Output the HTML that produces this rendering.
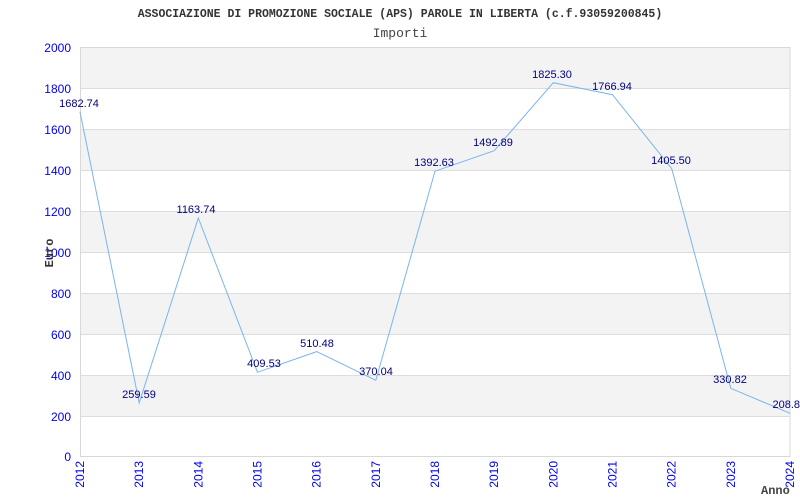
<!DOCTYPE html>
<html><head><meta charset="utf-8"><style>
html,body{margin:0;padding:0;background:#fff;width:800px;height:500px;overflow:hidden}
</style></head><body>
<svg width="800" height="500" xmlns="http://www.w3.org/2000/svg">
<text x="400" y="17" text-anchor="middle" font-family="Liberation Mono, monospace" font-size="11.5" font-weight="bold" fill="#333">ASSOCIAZIONE DI PROMOZIONE SOCIALE (APS) PAROLE IN LIBERTA (c.f.93059200845)</text>
<text x="400" y="37" text-anchor="middle" font-family="Liberation Mono, monospace" font-size="13" fill="#444">Importi</text>
<g fill="#f3f3f3">
<rect x="80" y="47" width="710" height="41"/>
<rect x="80" y="129" width="710" height="41"/>
<rect x="80" y="211" width="710" height="41"/>
<rect x="80" y="293" width="710" height="41"/>
<rect x="80" y="375" width="710" height="41"/>
</g>
<g stroke="#ddd" stroke-width="1">
<line x1="80" y1="88.5" x2="790" y2="88.5"/><line x1="80" y1="129.5" x2="790" y2="129.5"/>
<line x1="80" y1="170.5" x2="790" y2="170.5"/><line x1="80" y1="211.5" x2="790" y2="211.5"/>
<line x1="80" y1="252.5" x2="790" y2="252.5"/><line x1="80" y1="293.5" x2="790" y2="293.5"/>
<line x1="80" y1="334.5" x2="790" y2="334.5"/><line x1="80" y1="375.5" x2="790" y2="375.5"/>
<line x1="80" y1="416.5" x2="790" y2="416.5"/>
</g>
<rect x="80.5" y="47.5" width="709.5" height="409" fill="none" stroke="#d8d8d8"/>
<g font-family="Liberation Sans, sans-serif" font-size="12" fill="#0000ee" text-anchor="end">
<text x="71" y="52">2000</text><text x="71" y="93">1800</text><text x="71" y="134">1600</text>
<text x="71" y="175">1400</text><text x="71" y="216">1200</text><text x="71" y="257">1000</text>
<text x="71" y="298">800</text><text x="71" y="339">600</text><text x="71" y="380">400</text>
<text x="71" y="421">200</text><text x="71" y="461">0</text>
</g>
<g font-family="Liberation Sans, sans-serif" font-size="12" fill="#0000ee" text-anchor="end">
<text transform="translate(84,461) rotate(-90)">2012</text>
<text transform="translate(143.2,461) rotate(-90)">2013</text>
<text transform="translate(202.3,461) rotate(-90)">2014</text>
<text transform="translate(261.5,461) rotate(-90)">2015</text>
<text transform="translate(320.7,461) rotate(-90)">2016</text>
<text transform="translate(379.8,461) rotate(-90)">2017</text>
<text transform="translate(439,461) rotate(-90)">2018</text>
<text transform="translate(498.2,461) rotate(-90)">2019</text>
<text transform="translate(557.3,461) rotate(-90)">2020</text>
<text transform="translate(616.5,461) rotate(-90)">2021</text>
<text transform="translate(675.7,461) rotate(-90)">2022</text>
<text transform="translate(734.8,461) rotate(-90)">2023</text>
<text transform="translate(794,461) rotate(-90)">2024</text>
</g>
<text transform="translate(53,253) rotate(-90)" text-anchor="middle" font-family="Liberation Mono, monospace" font-size="12" font-weight="bold" fill="#333">Euro</text>
<text x="761" y="494" font-family="Liberation Mono, monospace" font-size="12" font-weight="bold" fill="#444">Anno</text>
<polyline fill="none" stroke="#7ab4f0" stroke-width="1" points="80,111.9 139.2,402.9 198.3,218 257.5,372.3 316.7,351.6 375.8,380.3 435,171.2 494.2,150.7 553.3,82.7 612.5,94.7 671.7,168.6 730.8,388.3 790,413.3"/>
<g font-family="Liberation Sans, sans-serif" font-size="11" fill="#000080" text-anchor="middle">
<text x="79" y="107">1682.74</text>
<text x="139" y="398">259.59</text>
<text x="196" y="213">1163.74</text>
<text x="264" y="367">409.53</text>
<text x="317" y="347">510.48</text>
<text x="376" y="375">370.04</text>
<text x="434" y="166">1392.63</text>
<text x="493" y="146">1492.89</text>
<text x="552" y="78">1825.30</text>
<text x="612" y="90">1766.94</text>
<text x="671" y="164">1405.50</text>
<text x="730" y="383">330.82</text>
<text x="800" y="408" text-anchor="end">208.8</text>
</g>
</svg>
</body></html>
